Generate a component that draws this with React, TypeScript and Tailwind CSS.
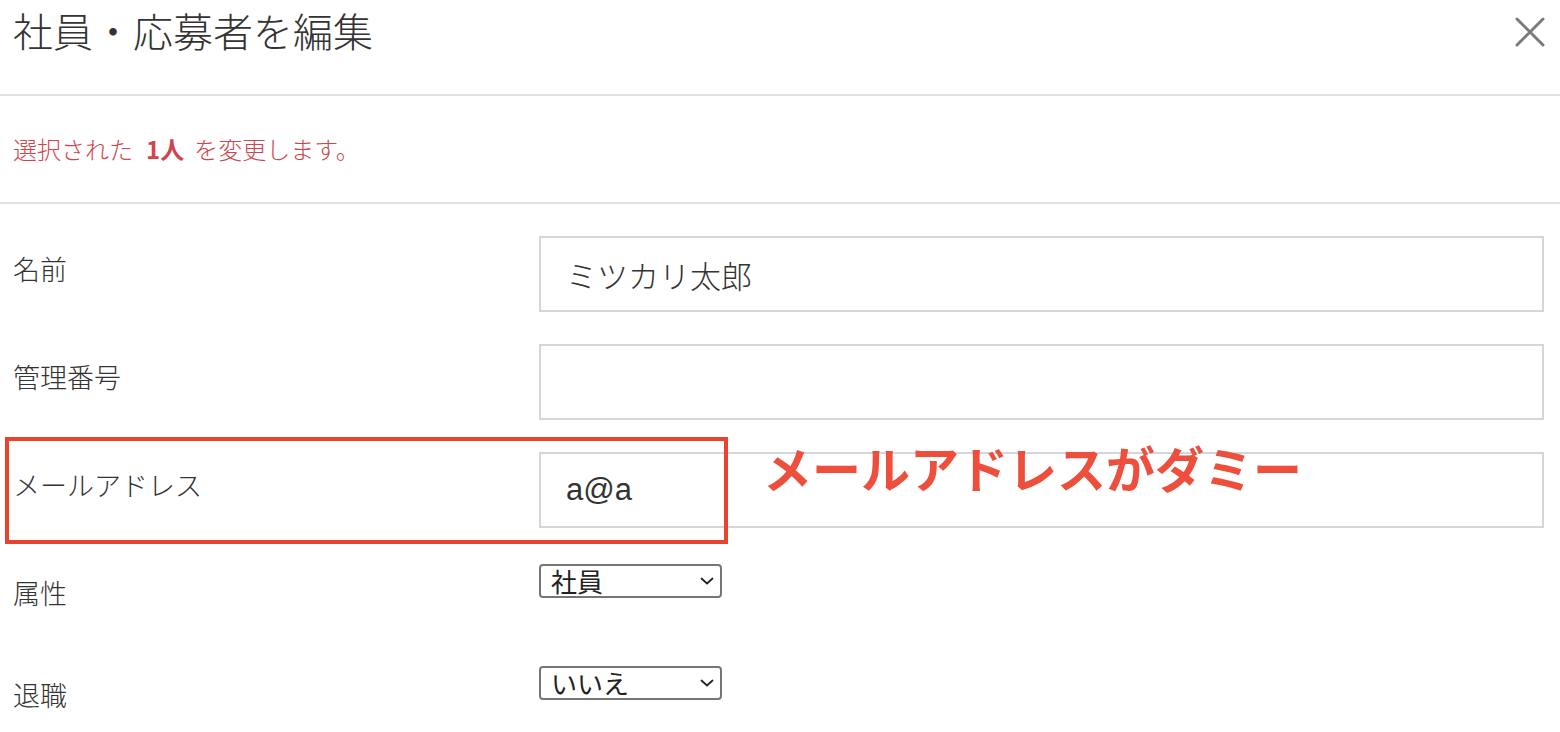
import React from "react"

const cjk = "font-['Noto_Sans_CJK_JP',sans-serif]"

function CloseIcon() {
  return (
    <svg width="30" height="30" viewBox="0 0 30 30" className="mt-[17px]">
      <path d="M2 2 L28 28 M28 2 L2 28" stroke="#7a7a7a" strokeWidth="3" strokeLinecap="round" />
    </svg>
  )
}

function Row({ label, children, tall }: { label: string; children: React.ReactNode; tall?: boolean }) {
  return (
    <div className={`flex items-start ${tall ? "" : "min-h-[70px]"}`}>
      <div className="w-[526px] shrink-0 pt-[13px] text-[27px] leading-[40px] font-light text-[#333]">{label}</div>
      <div className="flex-1">{children}</div>
    </div>
  )
}

function TextInput({ value }: { value: string }) {
  return (
    <input
      readOnly
      value={value}
      className="block w-full h-[76px] border-2 border-[#d3d6da] bg-white pl-[25px] text-[31px] font-light text-[#333] outline-none font-['Liberation_Sans','Noto_Sans_CJK_JP',sans-serif]"
    />
  )
}

function Select({ value, options }: { value: string; options: string[] }) {
  return (
    <div className="relative mt-1 w-[183px] h-[34px]">
      <select
        defaultValue={value}
        className={`appearance-none block w-full h-full border-2 border-[#767676] rounded-[4px] bg-white pl-[10px] text-[26px] leading-[30px] text-[#222] outline-none ${cjk}`}
      >
        {options.map((o) => (
          <option key={o}>{o}</option>
        ))}
      </select>
      <svg
        width="14"
        height="8"
        viewBox="0 0 14 8"
        className="absolute right-[8px] top-[13px] pointer-events-none"
      >
        <path d="M1.5 1.5 L7 6.5 L12.5 1.5" stroke="#222" strokeWidth="1.8" fill="none" strokeLinecap="round" />
      </svg>
    </div>
  )
}

export default function App() {
  return (
    <div className={`relative w-[1560px] h-[732px] overflow-hidden bg-white ${cjk}`}>
      <div className="h-[96px] flex justify-between items-start pl-[13px] pr-[15px] border-b-2 border-[#dfe2e6]">
        <h1 className="pt-[10px] text-[40px] leading-[40px] font-light text-[#333]">社員・応募者を編集</h1>
        <CloseIcon />
      </div>

      <div className="h-[108px] flex items-center pl-[13px] border-b-2 border-[#dfe2e6]">
        <p className="text-[24px] leading-[24px] font-light text-[#d0454d]">
          選択された<span className="font-bold ml-[13px] mr-[10px]">1人</span>を変更します。
        </p>
      </div>

      <div className="pl-[13px] pr-[16px] pt-8 flex flex-col gap-8">
        <Row label="名前" tall>
          <TextInput value="ミツカリ太郎" />
        </Row>
        <Row label="管理番号" tall>
          <TextInput value="" />
        </Row>
        <Row label="メールアドレス" tall>
          <TextInput value="a@a" />
        </Row>
        <Row label="属性">
          <Select value="社員" options={["社員", "応募者"]} />
        </Row>
        <Row label="退職">
          <Select value="いいえ" options={["いいえ", "はい"]} />
        </Row>
      </div>

      <div className="absolute left-[5px] top-[437px] w-[723px] h-[107px] border-4 border-[#e8432f] pointer-events-none" />
      <div className="absolute left-[763px] top-[442px] text-[49px] leading-[49px] font-bold text-[#ee4f3d] whitespace-nowrap">
        メールアドレスがダミー
      </div>
    </div>
  )
}
